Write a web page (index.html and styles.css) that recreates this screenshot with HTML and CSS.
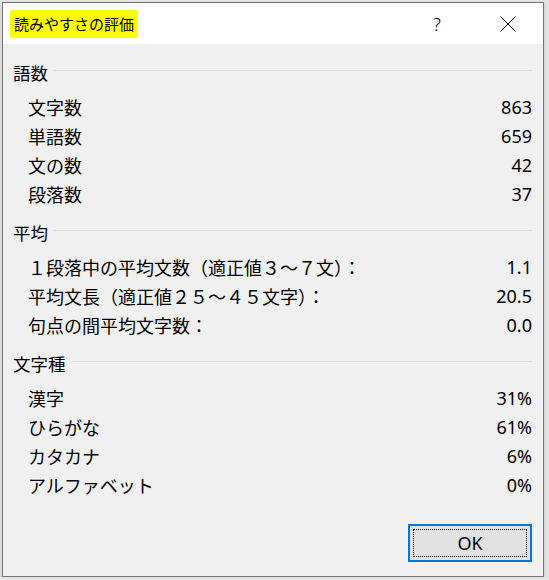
FILE: index.html
```html
<!DOCTYPE html>
<html lang="ja">
<head>
  <meta charset="UTF-8" />
  <meta name="viewport" content="width=device-width, initial-scale=1.0"/>
  <title>読みやすさの評価</title>
  <link rel="stylesheet" href="styles.css">
</head>
<body>
  <div class="dialog">
    <div class="titlebar">
      <span class="title">読みやすさの評価</span>
      <span class="help">?</span>
      <span class="close">
        <svg width="16" height="16" viewBox="0 0 16 16">
          <path d="M0.5 0.5 L15.5 15.5 M15.5 0.5 L0.5 15.5" stroke="#000" stroke-width="1" fill="none"/>
        </svg>
      </span>
    </div>

    <div class="content">
      <div class="group">
        <div class="group-head"><span>語数</span><i class="rule"></i></div>
        <div class="row"><span>文字数</span><span class="num">863</span></div>
        <div class="row"><span>単語数</span><span class="num">659</span></div>
        <div class="row"><span>文の数</span><span class="num">42</span></div>
        <div class="row"><span>段落数</span><span class="num">37</span></div>
      </div>

      <div class="group">
        <div class="group-head"><span>平均</span><i class="rule"></i></div>
        <div class="row"><span>１段落中の平均文数（適正値３～７文）：</span><span class="num">1.1</span></div>
        <div class="row"><span>平均文長（適正値２５～４５文字）：</span><span class="num">20.5</span></div>
        <div class="row"><span>句点の間平均文字数：</span><span class="num">0.0</span></div>
      </div>

      <div class="group">
        <div class="group-head"><span>文字種</span><i class="rule"></i></div>
        <div class="row"><span>漢字</span><span class="num">31%</span></div>
        <div class="row"><span>ひらがな</span><span class="num">61%</span></div>
        <div class="row"><span>カタカナ</span><span class="num">6%</span></div>
        <div class="row"><span>アルファベット</span><span class="num">0%</span></div>
      </div>

      <div class="footer">
        <button class="ok"><span class="focus">OK</span></button>
      </div>
    </div>
  </div>
</body>
</html>
```

FILE: styles.css
```css
body {
  margin: 0;
  background: #e4e4e4;
  font-family: "Noto Sans", "Noto Sans CJK JP", sans-serif;
  color: #000;
}

.dialog {
  margin: 2px 0 0 2px;
  width: 540px;
  border: 1px solid #767676;
  background: #f0f0f0;
  box-shadow: 0 2px 4px rgba(0, 0, 0, 0.15);
}

/* title bar */
.titlebar {
  height: 41px;
  background: #fff;
  display: flex;
  align-items: center;
  padding-left: 7px;
}

.title {
  font-family: "Noto Sans CJK JP", sans-serif;
  font-size: 15px;
  line-height: 22px;
  padding: 3px 4px;
  background: #ffff00;
  border-radius: 3px;
}

.help {
  margin-left: auto;
  width: 46px;
  text-align: center;
  font-family: "Noto Sans", sans-serif;
  font-size: 18px;
  font-weight: 300;
}

.close {
  width: 46px;
  margin: 0 12px 0 25px;
  display: flex;
  justify-content: center;
}

/* body */
.content {
  padding: 16px 11px 14px 10px;
}

.group + .group {
  margin-top: 12px;
}

.group-head {
  display: flex;
  align-items: center;
  height: 24px;
  font-size: 17.5px;
  margin-bottom: 8px;
}

.group-head span {
  font-family: "Noto Sans CJK JP", sans-serif;
}

.rule {
  flex: 1;
  height: 1px;
  background: #dadada;
  margin: -3px 0 0 5px;
}

.row {
  display: flex;
  justify-content: space-between;
  align-items: center;
  height: 29px;
  padding-left: 15px;
  font-size: 18px;
}

.row span:first-child {
  font-family: "Noto Sans CJK JP", sans-serif;
}

.num {
  font-family: "Noto Sans", sans-serif;
  font-size: 18px;
}

/* footer */
.footer {
  display: flex;
  justify-content: flex-end;
  margin-top: 25px;
}

.ok {
  width: 124px;
  height: 38px;
  padding: 3px;
  border: 2px solid #0078d7;
  background: #e1e1e1;
  font-family: "Noto Sans", sans-serif;
  font-size: 18px;
  color: #000;
  display: flex;
}

.focus {
  flex: 1;
  border: 1px dotted #000;
  display: flex;
  align-items: center;
  justify-content: center;
}
```
